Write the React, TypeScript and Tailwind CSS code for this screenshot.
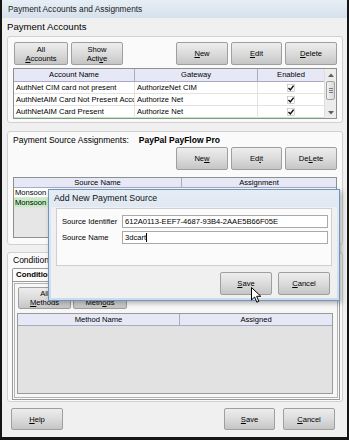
import React from "react";

const btn =
  "flex flex-col items-center justify-center border border-[#9f9f9f] rounded-[2px] bg-linear-to-b from-[#ededed] via-[#dcdcdc] to-[#c5c5c5] text-[7.6px] leading-[9px] text-black shrink-0";

function U({ c }: { c: string }) {
  return <span className="underline underline-offset-1">{c}</span>;
}

function Check() {
  return (
    <svg width="8" height="8" viewBox="0 0 8 8" className="block">
      <rect x="0.5" y="0.5" width="7" height="7" fill="#fff" stroke="#b5b5b5" strokeWidth="0.6" />
      <path d="M1.5 4 L3.3 5.9 L6.6 1.6" fill="none" stroke="#111" strokeWidth="1.5" />
    </svg>
  );
}

function AccRow({ name, gw, green }: { name: string; gw: string; green?: boolean }) {
  return (
    <div
      className={
        "flex h-[12px] shrink-0 border-b border-[#e3e3e3] text-[7.6px] leading-[11px] " +
        (green ? "bg-[#bfe9bf]" : "bg-white")
      }
    >
      <div className="w-[121px] shrink-0 overflow-hidden whitespace-nowrap pl-[2px] border-r border-[#e3e3e3]">{name}</div>
      <div className="w-[123px] shrink-0 overflow-hidden whitespace-nowrap pl-[2px] border-r border-[#e3e3e3]">{gw}</div>
      <div className="flex-1 flex items-center justify-center">{!green && <Check />}</div>
    </div>
  );
}

export default function App() {
  return (
    <div className="relative w-[349px] h-[440px] overflow-hidden bg-[#f0f0f0] border-l-2 border-r-2 border-b-[3px] border-[#151515] font-['Liberation_Sans',Arial,sans-serif] text-black">
      {/* title bar */}
      <div className="h-[18px] flex items-center pl-[6px] bg-linear-to-b from-[#e7eef6] to-[#d6e1ed] text-[8.3px] text-[#1b1b1b]">
        Payment Accounts and Assignments
      </div>
      <div className="h-[18px] flex items-center pl-[5px] text-[9.6px]">Payment Accounts</div>

      {/* Panel 1 */}
      <div className="ml-[5px] w-[336px] h-[87px] border border-[#d0d0d0] rounded-[3px] bg-[#fafafa] px-[5px] pt-[5px] flex flex-col">
        <div className="flex justify-between h-[23px]">
          <div className="flex gap-[3px] ml-[1px]">
            <div className={btn + " w-[54px] h-[23px]"}>
              <span>All</span>
              <span>
                <U c="A" />ccounts
              </span>
            </div>
            <div className={btn + " w-[52px] h-[23px]"}>
              <span>Show</span>
              <span>
                Acti<U c="v" />e
              </span>
            </div>
          </div>
          <div className="flex gap-[3px]">
            <div className={btn + " w-[52px] h-[23px]"}>
              <span>
                <U c="N" />ew
              </span>
            </div>
            <div className={btn + " w-[51px] h-[23px]"}>
              <span>
                <U c="E" />dit
              </span>
            </div>
            <div className={btn + " w-[52px] h-[23px]"}>
              <span>
                <U c="D" />elete
              </span>
            </div>
          </div>
        </div>
        <div className="mt-[3px] h-[51px] border border-[#8e8f8f] bg-white flex overflow-hidden">
          <div className="flex-1 flex flex-col overflow-hidden">
            <div className="h-[13px] shrink-0 flex bg-[#e6e8f6] border-b border-[#a9abc4] text-[7.6px] leading-[12px]">
              <div className="w-[121px] shrink-0 text-center border-r border-[#a9abc4]">Account Name</div>
              <div className="w-[123px] shrink-0 text-center border-r border-[#a9abc4]">Gateway</div>
              <div className="flex-1 text-center">Enabled</div>
            </div>
            <AccRow name="AuthNet CIM card not present" gw="AuthorizeNet CIM" />
            <AccRow name="AuthNetAIM Card Not Present Acco" gw="Authorize Net" />
            <div className="h-[11px] shrink-0 overflow-hidden flex flex-col">
              <AccRow name="AuthNetAIM Card Present" gw="Authorize Net" />
            </div>
            <AccRow name="" gw="" green />
          </div>
          {/* scrollbar */}
          <div className="w-[12px] shrink-0 bg-[#ececec] border-l border-[#dedede] flex flex-col items-center">
            <div className="h-[12px] flex items-center justify-center">
              <svg width="6" height="4" viewBox="0 0 6 4">
                <path d="M0 4 L3 0.5 L6 4 Z" fill="#606060" />
              </svg>
            </div>
            <div className="w-[9px] h-[19px] border border-[#a2a2a2] rounded-[2px] bg-linear-to-r from-[#f2f2f2] to-[#d8d8d8] flex flex-col items-center justify-center gap-[1px]">
              <div className="w-[4px] h-px bg-[#7a7a7a]" />
              <div className="w-[4px] h-px bg-[#7a7a7a]" />
              <div className="w-[4px] h-px bg-[#7a7a7a]" />
            </div>
            <div className="flex-1" />
            <div className="h-[10px] flex items-center justify-center">
              <svg width="6" height="4" viewBox="0 0 6 4">
                <path d="M0 0 L3 3.5 L6 0 Z" fill="#606060" />
              </svg>
            </div>
          </div>
        </div>
      </div>

      {/* Panel 2 */}
      <div className="ml-[5px] mt-[8px] w-[336px] h-[114px] border border-[#d0d0d0] rounded-[3px] bg-[#fafafa] px-[5px] pt-[2px] flex flex-col">
        <div className="h-[13px] flex items-center text-[8.5px]">
          <span>Payment Source Assignments:</span>
          <span className="ml-[10px] font-bold">PayPal PayFlow Pro</span>
        </div>
        <div className="flex justify-end gap-[3px] h-[23px]">
          <div className={btn + " w-[52px] h-[23px]"}>
            <span>
              Ne<U c="w" />
            </span>
          </div>
          <div className={btn + " w-[51px] h-[23px]"}>
            <span>
              Ed<U c="i" />t
            </span>
          </div>
          <div className={btn + " w-[52px] h-[23px]"}>
            <span>
              De<U c="L" />ete
            </span>
          </div>
        </div>
        <div className="mt-[7px] h-[61px] border border-[#8e8f8f] bg-[#e6e6e6] overflow-hidden flex flex-col">
          <div className="h-[10px] shrink-0 flex bg-[#e6e8f6] border-b border-[#a9abc4] text-[7.6px] leading-[9px]">
            <div className="w-[168px] shrink-0 text-center border-r border-[#a9abc4]">Source Name</div>
            <div className="flex-1 text-center">Assignment</div>
          </div>
          <div className="h-[10px] shrink-0 bg-white border-b border-[#e3e3e3] text-[7.6px] leading-[9px] pl-[1px]">Monsoon</div>
          <div className="h-[10px] shrink-0 bg-[#c4ecc0] border-b border-[#e3e3e3] text-[7.6px] leading-[9px] pl-[1px]">Monsoon</div>
        </div>
      </div>

      {/* Panel 3 */}
      <div className="ml-[5px] mt-[7px] w-[336px] h-[150px] border border-[#d0d0d0] rounded-[3px] bg-[#fafafa] pl-[4px] pr-[2px] pt-[1px] flex flex-col">
        <div className="h-[13px] flex items-center text-[8.5px] pl-[1px]">Conditions</div>
        <div className="mt-[1px] h-[13px] w-[70px] border border-b-0 border-[#9a9a9a] rounded-t-[2px] bg-[#fbfbfb] font-bold text-[7.8px] leading-[12px] pl-[3px]">
          Conditions
        </div>
        <div className="h-[119px] border border-[#9a9a9a] p-px">
          <div className="h-full border border-[#b4b4b4] bg-[#f7f7f7] pl-[2px] pr-[4px] pt-[3px] flex flex-col">
            <div className="flex gap-[2px] h-[22px] ml-[1px]">
              <div className={btn + " w-[53px] h-[22px]"}>
                <span>All</span>
                <span>
                  <U c="M" />ethods
                </span>
              </div>
              <div className={btn + " w-[54px] h-[22px]"}>
                <span>Active</span>
                <span>
                  Meth<U c="o" />ds
                </span>
              </div>
            </div>
            <div className="mt-[4px] h-[81px] border border-[#9a9a9a] bg-[#e2e2e2] flex flex-col">
              <div className="h-[12px] shrink-0 flex bg-[#e6e8f6] border-b border-[#a9abc4] text-[7.6px] leading-[11px]">
                <div className="w-[162px] shrink-0 text-center border-r border-[#a9abc4]">Method Name</div>
                <div className="flex-1 text-center">Assigned</div>
              </div>
            </div>
          </div>
        </div>
      </div>

      {/* footer */}
      <div className="mt-[6px] h-[22px] flex justify-between pl-[9px] pr-[12px]">
        <div className={btn + " w-[52px] h-[22px]"}>
          <span>
            <U c="H" />elp
          </span>
        </div>
        <div className="flex gap-[8px]">
          <div className={btn + " w-[51px] h-[22px]"}>
            <span>
              <U c="S" />ave
            </span>
          </div>
          <div className={btn + " w-[52px] h-[22px]"}>
            <span>
              <U c="C" />ancel
            </span>
          </div>
        </div>
      </div>

      {/* Dialog overlay */}
      <div className="absolute left-[46px] top-[189px] w-[292px] h-[112px] border border-[#6f96bf] bg-linear-to-b from-[#e4ecf5] to-[#cddbea] flex flex-col shadow-[2px_2px_5px_rgba(0,0,0,0.3)]">
        <div className="h-[17px] shrink-0 flex items-center pl-[5px] text-[8.8px] text-[#111]">Add New Payment Source</div>
        <div className="mx-[2px] mb-[2px] flex-1 bg-[#f0f0f0] px-[5px] pt-px flex flex-col">
          <div className="h-[58px] shrink-0 border border-[#cfcfcf] bg-[#fbfbfb] pl-[5px] pr-[3px] pt-[6px] flex flex-col">
            <div className="flex items-center h-[13px]">
              <div className="w-[60px] shrink-0 text-[7.6px]">Source Identifier</div>
              <div className="flex-1 h-[13px] border border-[#a9a9a9] bg-white pl-[2px] text-[7.6px] leading-[11px] whitespace-nowrap overflow-hidden">
                612A0113-EEF7-4687-93B4-2AAE5B66F05E
              </div>
            </div>
            <div className="flex items-center h-[13px] mt-[3px]">
              <div className="w-[60px] shrink-0 text-[7.6px]">Source Name</div>
              <div className="flex-1 h-[13px] border border-[#a9a9a9] bg-white pl-[2px] text-[7.6px] leading-[11px] flex items-center">
                <span>3dcart</span>
                <span className="w-px h-[9px] bg-black" />
              </div>
            </div>
          </div>
          <div className="mt-[6px] flex justify-end gap-[6px] pr-[2px]">
            <div className={btn + " w-[52px] h-[23px]"}>
              <span>
                <U c="S" />ave
              </span>
            </div>
            <div className={btn + " w-[52px] h-[23px]"}>
              <span>
                <U c="C" />ancel
              </span>
            </div>
          </div>
        </div>
      </div>

      {/* mouse cursor */}
      <svg className="absolute left-[249px] top-[287px]" width="11" height="17" viewBox="0 0 11 17">
        <path d="M0.5 0.5 L0.5 13 L3.6 10 L5.8 15.2 L7.8 14.3 L5.7 9.3 L9.8 9.3 Z" fill="#fff" stroke="#000" strokeWidth="1" strokeLinejoin="round" />
      </svg>
    </div>
  );
}
